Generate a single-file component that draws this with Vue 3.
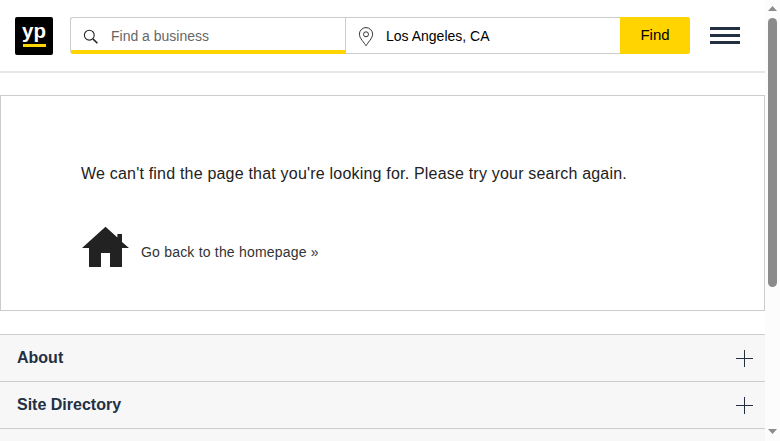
<script setup>
const sections = ['About', 'Site Directory']
</script>

<template>
  <div class="window">
    <div class="page">
      <header class="header">
        <a class="logo" aria-label="yp">
          <span class="logo-text">yp</span>
          <span class="logo-bar"></span>
        </a>
        <form class="search" @submit.prevent>
          <div class="field what">
            <svg class="search-icon" width="16" height="16" viewBox="0 0 16 16">
              <circle cx="6.300" cy="6.200" r="4.900" />
              <path class="handle" d="M9.900 9.900l4.500 4.300" />
            </svg>
            <span class="placeholder">Find a business</span>
          </div>
          <div class="field where">
            <svg class="pin-icon" width="16" height="20" viewBox="0 0 16 20">
              <path d="M8 18.700C6.200 15.600 1.400 11.300 1.400 7.200a6.600 6.600 0 0 1 13.200 0C14.600 11.300 9.800 15.600 8 18.700z" />
              <circle cx="8" cy="7.300" r="2.500" />
            </svg>
            <span>Los Angeles, CA</span>
          </div>
          <button class="find">Find</button>
        </form>
        <div class="menu"><i></i><i></i><i></i></div>
      </header>

      <main class="card">
        <p class="message">We can't find the page that you're looking for. Please try your search again.</p>
        <a class="home">
          <svg width="48" height="42" viewBox="0 0 48 42">
            <path d="M24.500 .8L36.400 11.500V8H41v8L48 22H41v19H29V27h-9v14H8V22H1z" />
          </svg>
          <span>Go back to the homepage »</span>
        </a>
      </main>

      <footer class="footer">
        <div v-for="s in sections" :key="s" class="row">
          <span>{{ s }}</span>
          <svg width="17" height="17" viewBox="0 0 17 17"><path d="M0 8.500h17M8.500 0v17" /></svg>
        </div>
        <div class="row"></div>
      </footer>
    </div>

    <div class="scrollbar">
      <svg width="9" height="5" viewBox="0 0 9 5"><path d="M4.500 0L9 5H0z" /></svg>
      <div class="thumb"></div>
      <svg class="down" width="9" height="5" viewBox="0 0 9 5"><path d="M0 0h9L4.500 5z" /></svg>
    </div>
  </div>
</template>

<style>
body {
  overflow: hidden;
  background: #fff;
}
</style>

<style scoped>
* {
  box-sizing: border-box;
}
.window {
  display: flex;
  height: 441px;
  overflow: hidden;
  font-family: "Liberation Sans", Arial, sans-serif;
}
.page {
  width: 765px;
  height: 441px;
  overflow: hidden;
}
.header {
  display: flex;
  align-items: flex-start;
  height: 73px;
  padding: 17px 0 0 15px;
  border-bottom: 2px solid #e6e6e6;
}
.logo {
  display: flex;
  flex-direction: column;
  align-items: center;
  width: 38px;
  height: 38px;
  margin-right: 17px;
  border-radius: 2px;
  background: #000;
}
.logo-text {
  height: 27px;
  color: #fff;
  font: bold 20.5px/28px "Liberation Sans", Arial, sans-serif;
}
.logo-bar {
  width: 23px;
  height: 2.5px;
  background: #ffd400;
}
.search {
  display: flex;
  flex: 0 0 620px;
  width: 620px;
  height: 37px;
  margin-right: 20px;
}
.field {
  display: flex;
  align-items: center;
  height: 37px;
  border: 1px solid #ccc;
  font-size: 14px;
  color: #000;
}
.what {
  width: 275px;
  padding-left: 12px;
  border-right: 0;
  border-bottom: 4px solid #ffd400;
  border-radius: 3px 0 0 3px;
}
.what .placeholder {
  margin-left: 12px;
  padding-top: 3px;
  color: #666;
}
.where {
  width: 275px;
  padding-left: 12px;
  border-right: 0;
}
.where span {
  margin-left: 12px;
}
.search-icon {
  margin-top: 6px;
  fill: none;
  stroke: #222;
  stroke-width: 1.1;
}
.handle {
  stroke-width: 1.5;
}
.pin-icon {
  margin-top: 2px;
  fill: none;
  stroke: #333;
  stroke-width: 1;
}
.find {
  width: 70px;
  height: 37px;
  padding: 0 0 2px;
  border: 0;
  border-radius: 0 2px 2px 0;
  background: #ffd400;
  color: #000;
  font: 15px "Liberation Sans", Arial, sans-serif;
}
.menu {
  display: flex;
  flex-direction: column;
  gap: 4px;
  width: 30px;
  padding-top: 10px;
}
.menu i {
  height: 3px;
  background: #233044;
}
.card {
  height: 216px;
  margin: 22px 0 23px;
  padding: 68px 80px 0;
  border: 1px solid #ccc;
}
.message {
  margin: 0;
  color: #222;
  font-size: 16px;
  line-height: 20px;
  letter-spacing: 0.2px;
  white-space: nowrap;
}
.home {
  display: flex;
  gap: 12px;
  margin-top: 42px;
  color: #333;
  font-size: 14px;
  line-height: 16px;
  letter-spacing: 0.2px;
}
.home svg {
  fill: #222;
}
.home span {
  padding-top: 18px;
}
.row {
  display: flex;
  justify-content: space-between;
  align-items: center;
  height: 47px;
  padding: 0 12px 0 17px;
  border-top: 1px solid #ccc;
  background: #f7f7f7;
  color: #233044;
  font-size: 16px;
  font-weight: bold;
}
.row svg {
  margin-top: 1px;
  stroke: #233044;
  stroke-width: 1;
}
.scrollbar {
  display: flex;
  flex-direction: column;
  align-items: center;
  width: 15px;
  height: 441px;
  padding: 6px 0 7px;
  background: #fcfcfc;
}
.scrollbar svg {
  fill: #8b8b8b;
}
.thumb {
  width: 9px;
  height: 269px;
  margin-top: 7px;
  border-radius: 5px;
  background: #8b8b8b;
}
.down {
  margin-top: auto;
}
</style>
